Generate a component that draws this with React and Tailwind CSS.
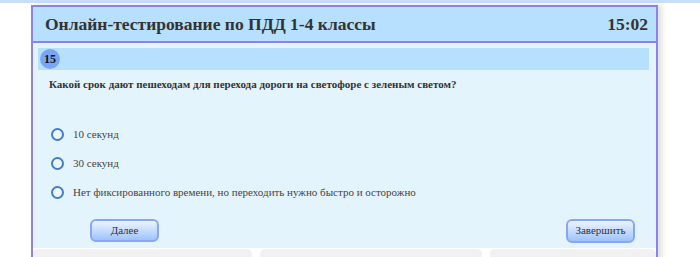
export default function App() {
  const options = [
    '10 секунд',
    '30 секунд',
    'Нет фиксированного времени, но переходить нужно быстро и осторожно',
  ];

  return (
    <div className="w-[700px] h-[257px] overflow-hidden bg-white [font-family:'Liberation_Serif','Times_New_Roman',serif]">
      {/* top strip */}
      <div className="h-[3px] bg-[#c9def8]" />

      <div className="ml-[31px] mt-[2px] w-[627px] border-x-2 border-t-2 border-[#8a84e4] shadow-[4px_0_5px_rgba(0,0,0,0.12)]">
        {/* header */}
        <div className="h-[36px] flex items-center justify-between pl-[12px] pr-[8px] bg-[#b6e0fd] border-b-2 border-[#8a84e4]">
          <h1 className="text-[17.5px] font-bold text-[#333]">Онлайн-тестирование по ПДД 1-4 классы</h1>
          <span className="text-[17.5px] font-bold text-[#333]">15:02</span>
        </div>

        {/* body */}
        <div className="bg-[#e4f4fd] pt-[5px] pl-[5px] pr-[7px] h-[205px] flex flex-col">
          <div className="h-[22px] bg-[#b6e0fd] flex items-center pl-[2px]">
            <div className="w-[20px] h-[20px] rounded-full bg-[#7aa5f5] flex items-center justify-center text-[12px] font-bold text-[#111]">
              15
            </div>
          </div>

          <p className="mt-[6px] ml-[11px] text-[11px] font-bold text-[#333]">
            Какой срок дают пешеходам для перехода дороги на светофоре с зеленым светом?
          </p>

          <div className="mt-[35px] ml-[13px] flex flex-col gap-[16px]">
            {options.map((o) => (
              <label key={o} className="flex items-center gap-[9px] h-[13px]">
                <span className="w-[13px] h-[13px] rounded-full border-2 border-[#3d7fcf] bg-[#eef7fe]" />
                <span className="text-[11px] text-[#444]">{o}</span>
              </label>
            ))}
          </div>

          <div className="mt-[20px] flex justify-between pl-[52px] pr-[14px]">
            <button className="w-[69px] h-[23px] rounded-[6px] border-2 border-[#87a6f7] bg-gradient-to-b from-[#eef4ff] to-[#9dc3fd] text-[11px] text-[#333]">
              Далее
            </button>
            <button className="w-[69px] h-[24px] rounded-[6px] border-2 border-[#87a6f7] bg-gradient-to-b from-[#eef4ff] to-[#9dc3fd] text-[11px] text-[#333]">
              Завершить
            </button>
          </div>
        </div>

        {/* next section, cut off */}
        <div className="flex gap-[8px] pt-[1px] bg-white">
          <div className="w-[219px] h-[20px] rounded-t-[5px] bg-[#f1f1f1]" />
          <div className="w-[222px] h-[20px] rounded-t-[5px] bg-[#f1f1f1]" />
          <div className="flex-1 h-[20px] rounded-t-[5px] bg-[#f1f1f1]" />
        </div>
      </div>
    </div>
  );
}
